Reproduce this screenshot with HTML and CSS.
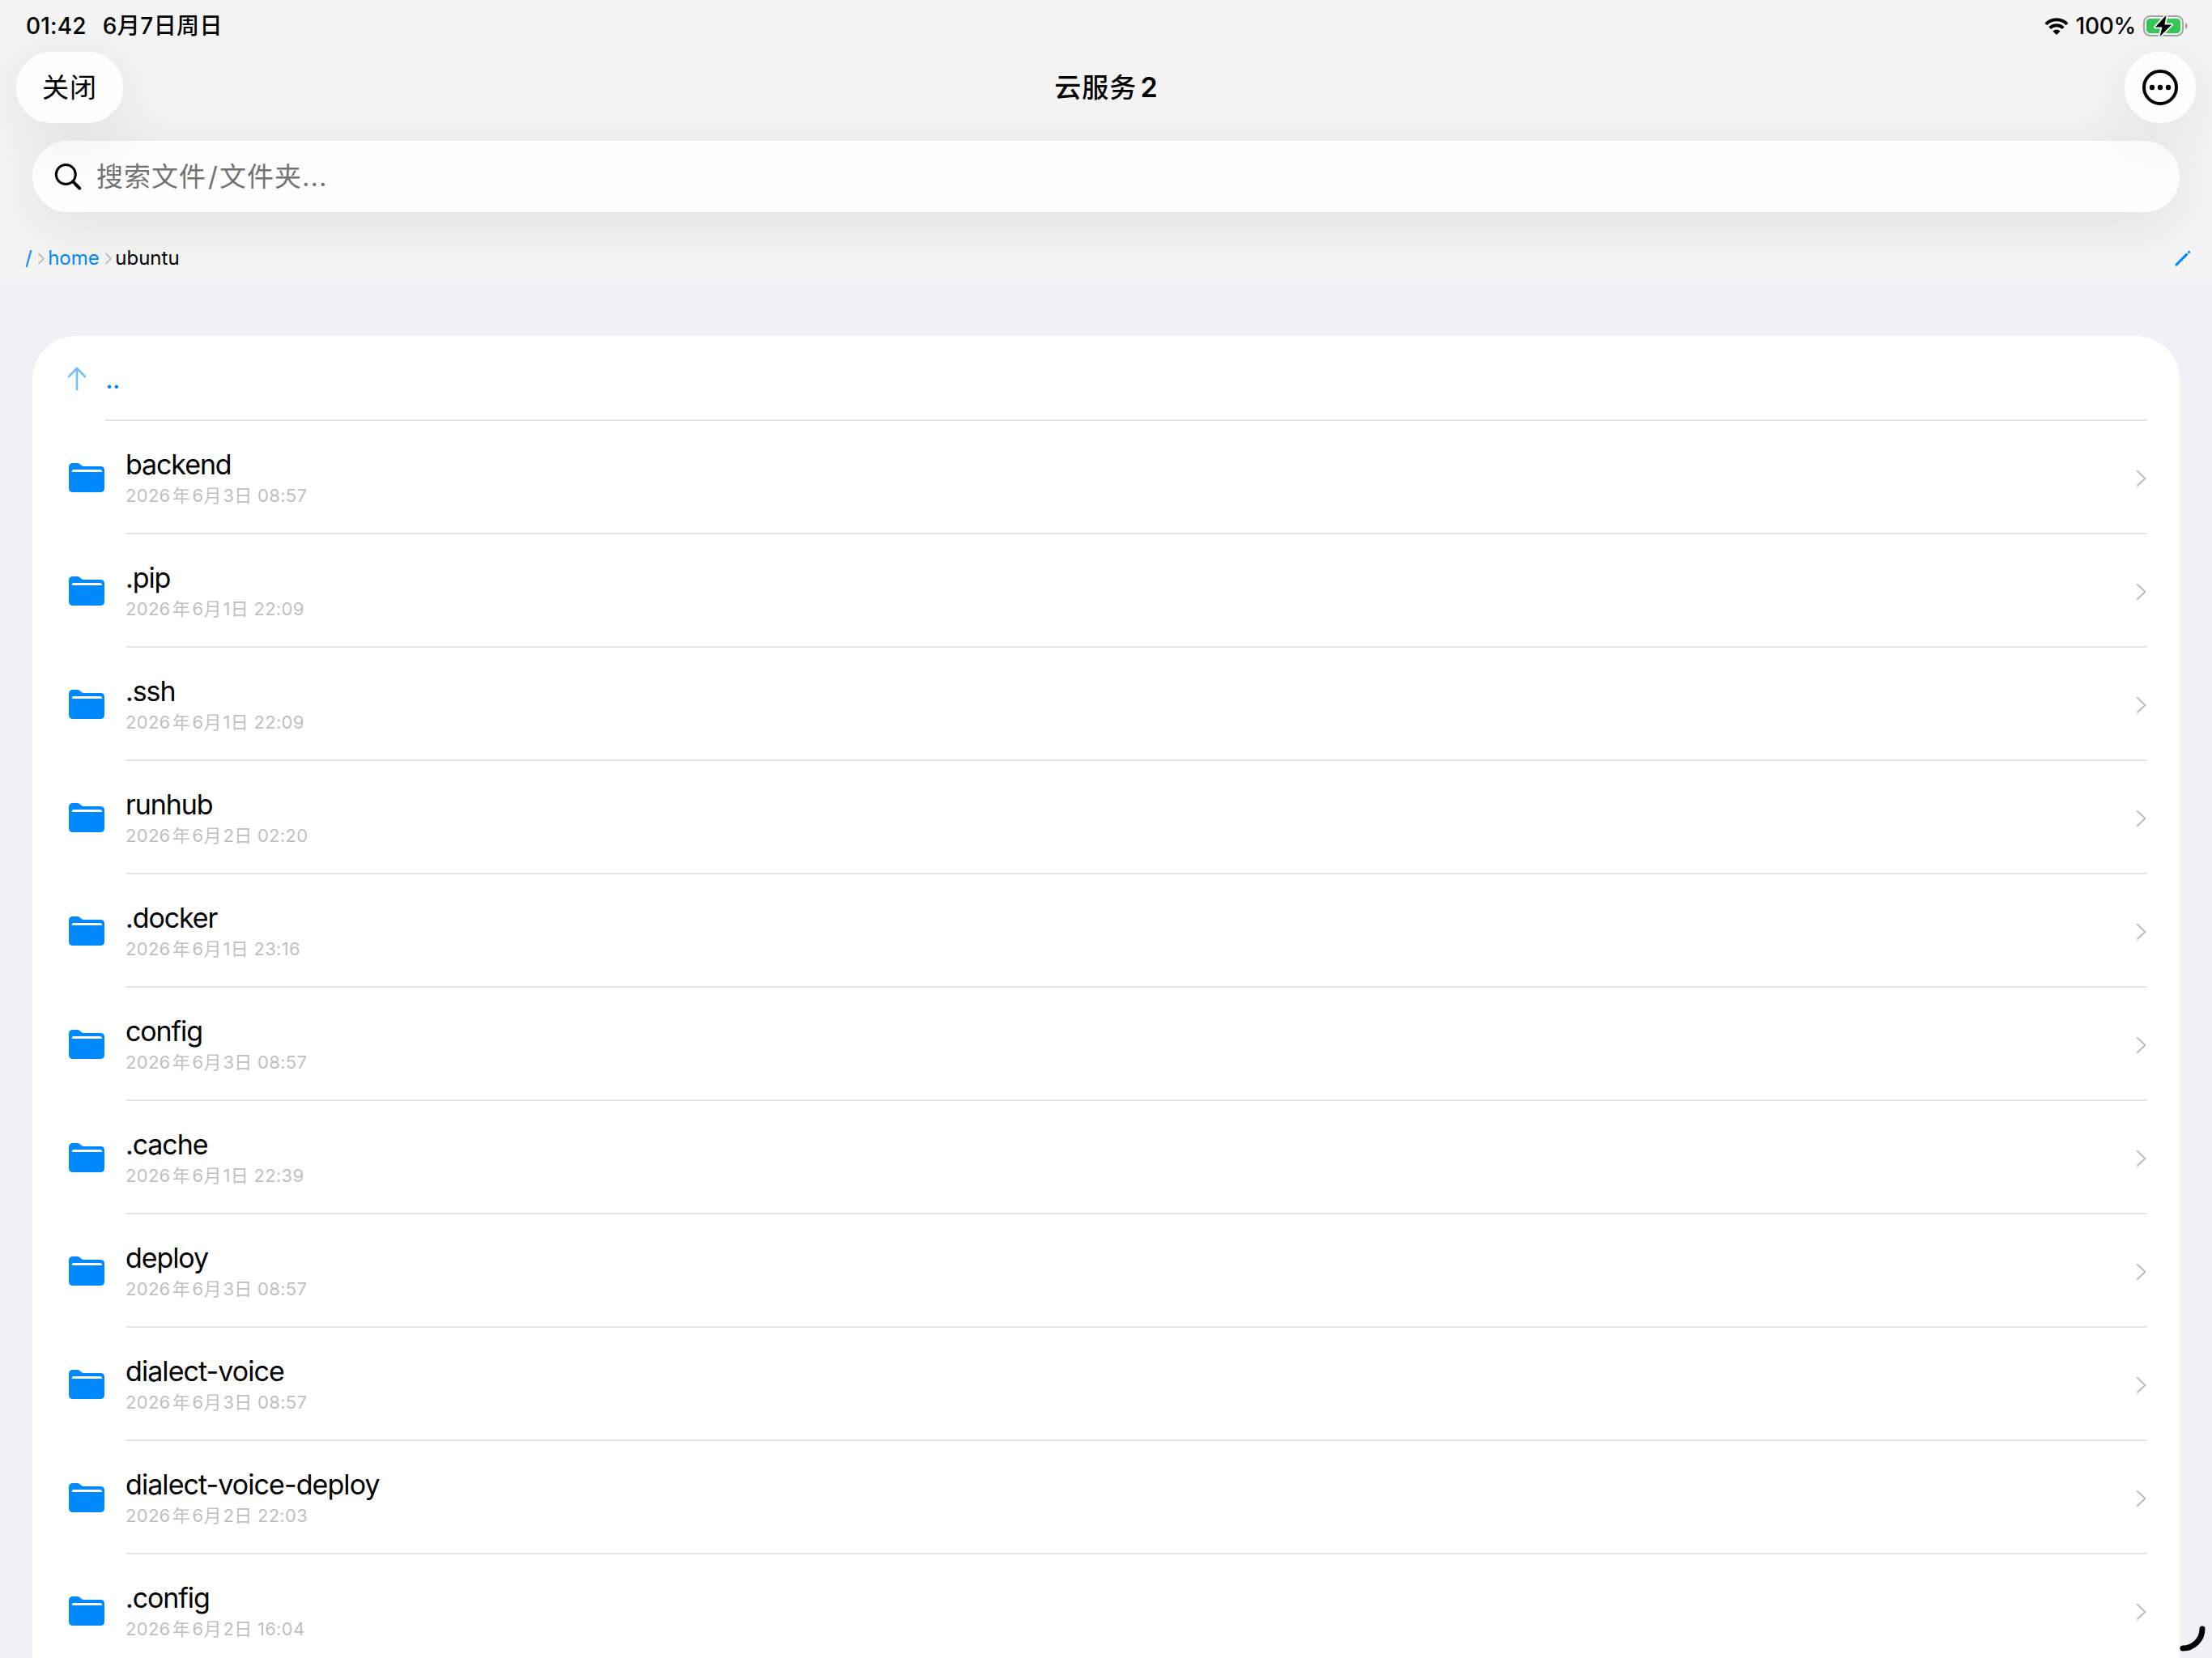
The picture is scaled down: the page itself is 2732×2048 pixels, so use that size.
FILE: index.html
```html
<!DOCTYPE html>
<html lang="zh-CN">
<head>
<meta charset="utf-8">
<title>云服务 2</title>
<link rel="stylesheet" href="styles.css">
</head>
<body>
<svg class="sprite" aria-hidden="true">
  <symbol id="folder" viewBox="0 0 44 36"><path fill="#0088ff" d="M0 5.500C0 1.800 1.800 0 5.500 0h5.200c3.600 0 3.800 3.900 7.800 3.900H39c3.400 0 5 1.700 5 5V31c0 3.300-1.700 5-5 5H5c-3.300 0-5-1.700-5-5z"/><path fill="#fff" d="M3.700 11V10.300Q3.700 8 6.200 8H38.400Q41 8 41 10.300V11z"/></symbol>
  <symbol id="chevron" viewBox="0 0 12 22"><path d="M1 2l9.400 9L1 20" fill="none" stroke="#bfbfc1" stroke-width="2.200" stroke-linecap="round" stroke-linejoin="round"/></symbol>
  <symbol id="chevron-small" viewBox="0 0 8 15"><path d="M1 1.500l6 6-6 6" fill="none" stroke="#bfbfc1" stroke-width="1.800" stroke-linecap="round" stroke-linejoin="round"/></symbol>
</svg>
<header class="header">
  <div class="status">
    <span class="time">01:42</span><span class="date">6月7日周日</span>
    <svg class="wifi" width="30" height="21" viewBox="0 0 30 21"><g fill="none" stroke="#000" stroke-width="4"><path d="M1.900 7.800a18.500 18.500 0 0 1 26.200 0"/><path d="M6.700 12.700a11.800 11.800 0 0 1 16.600 0"/></g><path d="M10.400 16.500a6.500 6.500 0 0 1 9.200 0L15 21z"/></svg>
    <span class="percent">100%</span>
    <svg class="battery" width="56" height="28" viewBox="0 0 56 28"><rect x="1" y="2" width="48" height="24" rx="7.500" fill="none" stroke="#a3a3a3" stroke-width="2"/><rect x="4" y="5" width="42" height="18" rx="4.500" fill="#34c759"/><path d="M52 10.200c3.600 1.200 3.600 6.400 0 7.600z" fill="#a3a3a3"/><path d="M28.500.8L15 15.600h8.500L20.500 27.200 35 12.400h-8.600z" fill="#000" stroke="#f4f4f4" stroke-width="4" paint-order="stroke" stroke-linejoin="round"/></svg>
  </div>
  <div class="nav">
    <button class="glass close">关闭</button>
    <h1 class="title">云服务 <span class="num">2</span></h1>
    <button class="glass more"><svg width="44" height="44" viewBox="0 0 44 44"><circle cx="22" cy="22" r="20" fill="none" stroke="#000" stroke-width="4"/><circle cx="12" cy="22" r="3.200"/><circle cx="22" cy="22" r="3.200"/><circle cx="32" cy="22" r="3.200"/></svg></button>
  </div>
  <div class="glass search">
    <svg width="34" height="34" viewBox="0 0 34 34"><circle cx="14.300" cy="14.500" r="12" fill="none" stroke="#000" stroke-width="3"/><path d="M23 23.200l8.300 8.400" stroke="#000" stroke-width="4" stroke-linecap="round"/></svg>
    <span class="placeholder">搜索文件<span class="slash">/</span>文件夹...</span>
  </div>
  <nav class="crumbs">
    <a class="root">/</a><svg class="sep"><use href="#chevron-small"/></svg><a class="home">home</a><svg class="sep"><use href="#chevron-small"/></svg><span class="current">ubuntu</span>
    <svg class="edit" width="20" height="20" viewBox="0 0 20 20" fill="none" stroke="#0088ff" stroke-width="3.100" stroke-linecap="round"><path d="M2 18L14.600 5.400M17.600 2.400v.1"/></svg>
  </nav>
</header>
<main class="list">
  <div class="row up">
    <svg width="24" height="30" viewBox="0 0 24 30" fill="none" stroke="#73bdff" stroke-width="2.600" stroke-linecap="round" stroke-linejoin="round"><path d="M12 28V2M2 12.200L12 2l10 10.200"/></svg>
    <div class="cell"><span class="name">..</span></div>
  </div>
  <div class="row"><svg class="folder"><use href="#folder"/></svg><div class="cell"><div class="text"><span class="name">backend</span><span class="meta">2026<span class="y">年</span>6<span class="m">月</span>3日 08:57</span></div><svg class="go"><use href="#chevron"/></svg></div></div>
  <div class="row"><svg class="folder"><use href="#folder"/></svg><div class="cell"><div class="text"><span class="name">.pip</span><span class="meta">2026<span class="y">年</span>6<span class="m">月</span>1日 22:09</span></div><svg class="go"><use href="#chevron"/></svg></div></div>
  <div class="row"><svg class="folder"><use href="#folder"/></svg><div class="cell"><div class="text"><span class="name">.ssh</span><span class="meta">2026<span class="y">年</span>6<span class="m">月</span>1日 22:09</span></div><svg class="go"><use href="#chevron"/></svg></div></div>
  <div class="row"><svg class="folder"><use href="#folder"/></svg><div class="cell"><div class="text"><span class="name">runhub</span><span class="meta">2026<span class="y">年</span>6<span class="m">月</span>2日 02:20</span></div><svg class="go"><use href="#chevron"/></svg></div></div>
  <div class="row"><svg class="folder"><use href="#folder"/></svg><div class="cell"><div class="text"><span class="name">.docker</span><span class="meta">2026<span class="y">年</span>6<span class="m">月</span>1日 23:16</span></div><svg class="go"><use href="#chevron"/></svg></div></div>
  <div class="row"><svg class="folder"><use href="#folder"/></svg><div class="cell"><div class="text"><span class="name">config</span><span class="meta">2026<span class="y">年</span>6<span class="m">月</span>3日 08:57</span></div><svg class="go"><use href="#chevron"/></svg></div></div>
  <div class="row"><svg class="folder"><use href="#folder"/></svg><div class="cell"><div class="text"><span class="name">.cache</span><span class="meta">2026<span class="y">年</span>6<span class="m">月</span>1日 22:39</span></div><svg class="go"><use href="#chevron"/></svg></div></div>
  <div class="row"><svg class="folder"><use href="#folder"/></svg><div class="cell"><div class="text"><span class="name">deploy</span><span class="meta">2026<span class="y">年</span>6<span class="m">月</span>3日 08:57</span></div><svg class="go"><use href="#chevron"/></svg></div></div>
  <div class="row"><svg class="folder"><use href="#folder"/></svg><div class="cell"><div class="text"><span class="name long">dialect-voice</span><span class="meta">2026<span class="y">年</span>6<span class="m">月</span>3日 08:57</span></div><svg class="go"><use href="#chevron"/></svg></div></div>
  <div class="row"><svg class="folder"><use href="#folder"/></svg><div class="cell"><div class="text"><span class="name long">dialect-voice-deploy</span><span class="meta">2026<span class="y">年</span>6<span class="m">月</span>2日 22:03</span></div><svg class="go"><use href="#chevron"/></svg></div></div>
  <div class="row"><svg class="folder"><use href="#folder"/></svg><div class="cell"><div class="text"><span class="name">.config</span><span class="meta">2026<span class="y">年</span>6<span class="m">月</span>2日 16:04</span></div><svg class="go"><use href="#chevron"/></svg></div></div>
</main>
<svg class="corner" width="34" height="34" viewBox="0 0 34 34"><path d="M28 5A24 24 0 0 1 4 29" fill="none" stroke="#000" stroke-width="7" stroke-linecap="round"/></svg>
</body>
</html>
```
FILE: styles.css
```css
* { box-sizing: border-box; }
body {
  margin: 0;
  height: 2048px;
  overflow: hidden;
  background: #f1f0f6;
  color: #000;
  font-family: Inter, "Noto Sans CJK SC", sans-serif;
}
svg { display: block; flex: none; }
.sprite { display: none; }
.header { height: 345px; background: #f4f4f4; overflow: hidden; }
.status {
  height: 64px;
  padding: 0 29px 0 32px;
  display: flex;
  align-items: center;
  font-size: 28px;
  font-weight: 500;
  line-height: 64px;
}
.time { letter-spacing: .2px; }
.date { margin-left: 20px; letter-spacing: .4px; }
.wifi { margin-left: auto; }
.percent { margin-left: 9px; letter-spacing: -.3px; }
.battery { margin-left: 9px; }
.nav {
  height: 88px;
  padding: 0 20px;
  display: grid;
  grid-template-columns: 1fr auto 1fr;
  align-items: center;
}
.glass {
  padding: 0;
  border: 2px solid #fff;
  border-radius: 44px;
  background: rgba(255, 255, 255, .8);
  box-shadow: 0 14px 76px rgba(0, 0, 0, .085);
}
.close {
  width: 132px;
  height: 88px;
  font: 400 33px/84px Inter, "Noto Sans CJK SC", sans-serif;
  letter-spacing: 1px;
  color: #000;
}
.title { margin: 0; font-size: 33px; font-weight: 500; line-height: 88px; letter-spacing: 1px; word-spacing: -5.5px; }
.num { font-size: 34px; font-weight: 600; letter-spacing: 0; }
.more { width: 88px; height: 88px; justify-self: end; display: flex; align-items: center; justify-content: center; }
.search {
  margin: 22px 40px 0;
  height: 88px;
  padding-left: 25px;
  display: flex;
  align-items: center;
  gap: 18px;
}
.placeholder { font-size: 33px; line-height: 84px; letter-spacing: 1px; color: #727272; }
.slash { padding: 0 1px 0 2px; }
.crumbs {
  height: 82px;
  margin-top: 16px;
  padding: 0 26px 0 31px;
  display: flex;
  align-items: center;
  font-size: 24px;
  line-height: 32px;
}
.root, .home { color: #0088ff; }
.sep { width: 8px; height: 15px; margin: 1px 4.5px 0 7px; }
.edit { margin-left: auto; }
.list { margin: 70px 40px 0; background: #fff; border-radius: 54px 54px 0 0; overflow: hidden; }
.row { height: 140px; padding: 0 40px 0 45px; display: flex; align-items: center; }
.folder { width: 44px; height: 36px; margin-right: 26px; }
.cell {
  flex: 1;
  height: 100%;
  display: flex;
  align-items: flex-start;
  justify-content: space-between;
  border-bottom: 2px solid #e6e6e6;
}
.text { padding-top: 32px; display: flex; flex-direction: column; gap: 2px; }
.name { font-size: 34px; line-height: 44px; letter-spacing: -1.1px; }
.long { letter-spacing: -.93px; }
.meta { font-size: 22px; line-height: 28px; color: #bfbfc1; white-space: pre; letter-spacing: .3px; }
.y { padding: 0 2.300px; }
.m { padding-right: 1.700px; }
.go { width: 12px; height: 22px; margin: 60px 1px 0 0; }
.up { height: 105px; }
.up svg { margin: 0 23px 0 -2px; }
.up .name { color: #0088ff; }
.up .cell { padding-top: 31px; }
.corner { position: absolute; left: 2692px; top: 2007px; }
```
